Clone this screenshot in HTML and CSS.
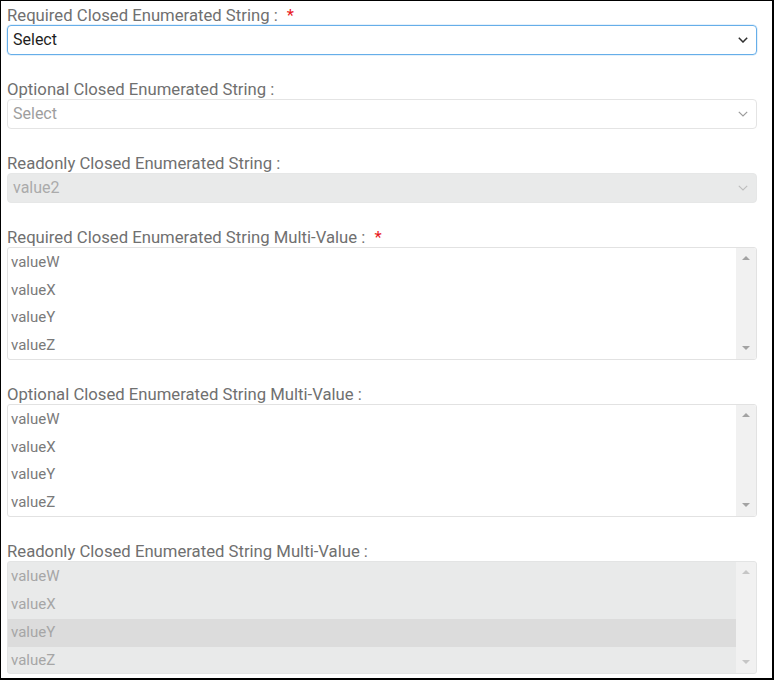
FILE: index.html
```html
<!DOCTYPE html>
<html lang="en">
<head>
<meta charset="utf-8">
<title>Closed Enumerated String</title>
<link rel="stylesheet" href="styles.css">
</head>
<body>
<div class="page">
  <form class="form">
    <div class="field">
      <label class="label">Required Closed Enumerated String : <span class="req">*</span></label>
      <div class="select select--focus">
        <span class="select-value">Select</span>
        <svg class="chev" viewBox="0 0 10 6" width="10" height="6"><path d="M0.8 0.8 L5 5 L9.2 0.8" fill="none" stroke="currentColor" stroke-width="1.5"/></svg>
      </div>
    </div>
    <div class="field">
      <label class="label">Optional Closed Enumerated String :</label>
      <div class="select select--plain">
        <span class="select-value placeholder">Select</span>
        <svg class="chev" viewBox="0 0 10 6" width="10" height="6"><path d="M0.8 0.8 L5 5 L9.2 0.8" fill="none" stroke="currentColor" stroke-width="1.2"/></svg>
      </div>
    </div>
    <div class="field">
      <label class="label">Readonly Closed Enumerated String :</label>
      <div class="select select--ro">
        <span class="select-value">value2</span>
        <svg class="chev" viewBox="0 0 10 6" width="10" height="6"><path d="M0.8 0.8 L5 5 L9.2 0.8" fill="none" stroke="currentColor" stroke-width="1.1"/></svg>
      </div>
    </div>
    <div class="field">
      <label class="label">Required Closed Enumerated String Multi-Value : <span class="req">*</span></label>
      <div class="listbox">
        <div class="options">
          <div class="option">valueW</div>
          <div class="option">valueX</div>
          <div class="option">valueY</div>
          <div class="option">valueZ</div>
        </div>
        <div class="scroll"><span class="arr-up"></span><span class="arr-down"></span></div>
      </div>
    </div>
    <div class="field">
      <label class="label">Optional Closed Enumerated String Multi-Value :</label>
      <div class="listbox">
        <div class="options">
          <div class="option">valueW</div>
          <div class="option">valueX</div>
          <div class="option">valueY</div>
          <div class="option">valueZ</div>
        </div>
        <div class="scroll"><span class="arr-up"></span><span class="arr-down"></span></div>
      </div>
    </div>
    <div class="field">
      <label class="label">Readonly Closed Enumerated String Multi-Value :</label>
      <div class="listbox listbox--ro">
        <div class="options">
          <div class="option">valueW</div>
          <div class="option">valueX</div>
          <div class="option option--sel">valueY</div>
          <div class="option">valueZ</div>
        </div>
        <div class="scroll"><span class="arr-up"></span><span class="arr-down"></span></div>
      </div>
    </div>
  </form>
</div>
</body>
</html>
```

FILE: styles.css
```css
html, body {
  margin: 0;
  padding: 0;
  background: #fff;
}

.page {
  box-sizing: border-box;
  width: 774px;
  height: 680px;
  border-style: solid;
  border-color: #000;
  border-width: 1px 2px 2px 1px;
  padding: 6px 15px 0 6px;
  font-family: Roboto, "Liberation Sans", Arial, sans-serif;
  overflow: hidden;
}

.form {
  display: flex;
  flex-direction: column;
  gap: 26px;
  margin: 0;
}

.field {
  display: flex;
  flex-direction: column;
}

.label {
  display: block;
  height: 18px;
  font-size: 16.7px;
  line-height: 18px;
  color: #707070;
  white-space: nowrap;
}

.req {
  color: #e8191d;
  margin-left: 5px;
}

.select {
  box-sizing: border-box;
  height: 30px;
  display: flex;
  align-items: center;
  justify-content: space-between;
  padding: 0 8px 0 5px;
  border: 1px solid #e2e2e2;
  border-radius: 4px;
  font-size: 16px;
}

.select--focus {
  border-color: #66aee9;
  color: #1e1e1e;
  box-shadow: 0 0 0 0.5px rgba(102, 174, 233, 0.35);
}

.select--focus .chev { color: #2f2f2f; }

.select--plain { border-color: #e4e4e4; }
.select--plain .chev { color: #9c9c9c; }

.placeholder { color: #9e9e9e; }

.select--ro {
  background: #e9eaea;
  border-color: #e6e7e7;
  color: #ababab;
}

.select--ro .chev { color: #bdbdbd; }

.select-value { line-height: 20px; }

.chev { display: block; }

.listbox {
  box-sizing: border-box;
  height: 113px;
  display: flex;
  border: 1px solid #e2e2e2;
  border-radius: 3px;
  overflow: hidden;
  background: #fff;
}

.options {
  flex: 1;
  display: flex;
  flex-direction: column;
  padding-top: 1px;
}

.option {
  height: 27.5px;
  line-height: 27.5px;
  padding-left: 3px;
  font-size: 15px;
  color: #7a7a7a;
}

.scroll {
  width: 20px;
  background: #f1f1f1;
  display: flex;
  flex-direction: column;
  justify-content: space-between;
  align-items: center;
  padding: 8px 0 9px;
  box-sizing: border-box;
}

.arr-up,
.arr-down {
  width: 0;
  height: 0;
  border-left: 4px solid transparent;
  border-right: 4px solid transparent;
}

.arr-up { border-bottom: 4px solid #a3a3a3; }
.arr-down { border-top: 4px solid #a3a3a3; }

.listbox--ro {
  background: #e9eaea;
  border-color: #e3e4e4;
}

.listbox--ro .option { color: #a6a6a6; }
.listbox--ro .option--sel { background: #dcdcdc; margin-top: 1px; }
.listbox--ro .arr-up { border-bottom-color: #c6c6c6; }
.listbox--ro .arr-down { border-top-color: #c6c6c6; }
```
